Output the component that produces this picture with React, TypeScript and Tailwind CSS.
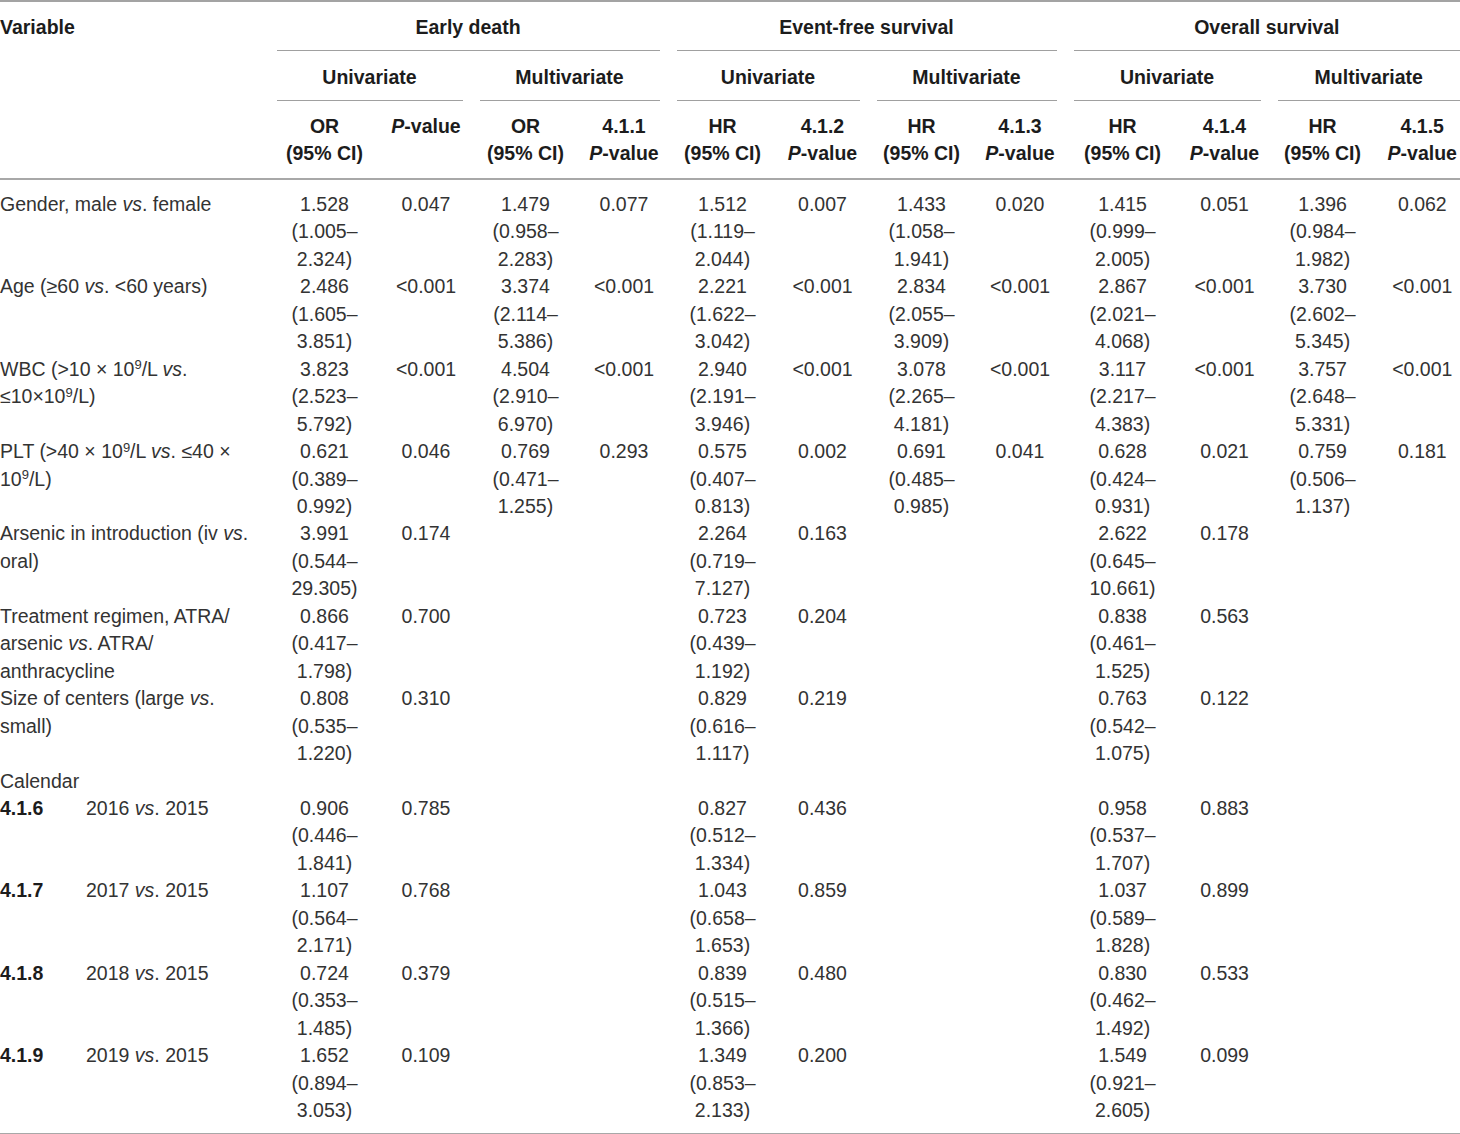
import React from "react";

type Cells = ([string, string, string, string] | null)[];

const Vs = () => <i>vs</i>;

const rows: { label: React.ReactNode; cells: Cells }[] = [
  {
    label: <>Gender, male <Vs />. female</>,
    cells: [
      ["1.528", "(1.005–", "2.324)", "0.047"],
      ["1.479", "(0.958–", "2.283)", "0.077"],
      ["1.512", "(1.119–", "2.044)", "0.007"],
      ["1.433", "(1.058–", "1.941)", "0.020"],
      ["1.415", "(0.999–", "2.005)", "0.051"],
      ["1.396", "(0.984–", "1.982)", "0.062"],
    ],
  },
  {
    label: <>Age (≥60 <Vs />. &lt;60 years)</>,
    cells: [
      ["2.486", "(1.605–", "3.851)", "<0.001"],
      ["3.374", "(2.114–", "5.386)", "<0.001"],
      ["2.221", "(1.622–", "3.042)", "<0.001"],
      ["2.834", "(2.055–", "3.909)", "<0.001"],
      ["2.867", "(2.021–", "4.068)", "<0.001"],
      ["3.730", "(2.602–", "5.345)", "<0.001"],
    ],
  },
  {
    label: (
      <>
        WBC (&gt;10 × 10<sup className="text-[13px]">9</sup>/L <Vs />.
        <br />≤10×10<sup className="text-[13px]">9</sup>/L)
      </>
    ),
    cells: [
      ["3.823", "(2.523–", "5.792)", "<0.001"],
      ["4.504", "(2.910–", "6.970)", "<0.001"],
      ["2.940", "(2.191–", "3.946)", "<0.001"],
      ["3.078", "(2.265–", "4.181)", "<0.001"],
      ["3.117", "(2.217–", "4.383)", "<0.001"],
      ["3.757", "(2.648–", "5.331)", "<0.001"],
    ],
  },
  {
    label: (
      <>
        PLT (&gt;40 × 10<sup className="text-[13px]">9</sup>/L <Vs />. ≤40 ×
        <br />10<sup className="text-[13px]">9</sup>/L)
      </>
    ),
    cells: [
      ["0.621", "(0.389–", "0.992)", "0.046"],
      ["0.769", "(0.471–", "1.255)", "0.293"],
      ["0.575", "(0.407–", "0.813)", "0.002"],
      ["0.691", "(0.485–", "0.985)", "0.041"],
      ["0.628", "(0.424–", "0.931)", "0.021"],
      ["0.759", "(0.506–", "1.137)", "0.181"],
    ],
  },
  {
    label: (
      <>
        Arsenic in introduction (iv <Vs />.
        <br />
        oral)
      </>
    ),
    cells: [
      ["3.991", "(0.544–", "29.305)", "0.174"],
      null,
      ["2.264", "(0.719–", "7.127)", "0.163"],
      null,
      ["2.622", "(0.645–", "10.661)", "0.178"],
      null,
    ],
  },
  {
    label: (
      <>
        Treatment regimen, ATRA/
        <br />
        arsenic <Vs />. ATRA/
        <br />
        anthracycline
      </>
    ),
    cells: [
      ["0.866", "(0.417–", "1.798)", "0.700"],
      null,
      ["0.723", "(0.439–", "1.192)", "0.204"],
      null,
      ["0.838", "(0.461–", "1.525)", "0.563"],
      null,
    ],
  },
  {
    label: (
      <>
        Size of centers (large <Vs />.
        <br />
        small)
      </>
    ),
    cells: [
      ["0.808", "(0.535–", "1.220)", "0.310"],
      null,
      ["0.829", "(0.616–", "1.117)", "0.219"],
      null,
      ["0.763", "(0.542–", "1.075)", "0.122"],
      null,
    ],
  },
];

const calRows: { tag: string; year: string; cells: Cells }[] = [
  {
    tag: "4.1.6",
    year: "2016",
    cells: [
      ["0.906", "(0.446–", "1.841)", "0.785"],
      null,
      ["0.827", "(0.512–", "1.334)", "0.436"],
      null,
      ["0.958", "(0.537–", "1.707)", "0.883"],
      null,
    ],
  },
  {
    tag: "4.1.7",
    year: "2017",
    cells: [
      ["1.107", "(0.564–", "2.171)", "0.768"],
      null,
      ["1.043", "(0.658–", "1.653)", "0.859"],
      null,
      ["1.037", "(0.589–", "1.828)", "0.899"],
      null,
    ],
  },
  {
    tag: "4.1.8",
    year: "2018",
    cells: [
      ["0.724", "(0.353–", "1.485)", "0.379"],
      null,
      ["0.839", "(0.515–", "1.366)", "0.480"],
      null,
      ["0.830", "(0.462–", "1.492)", "0.533"],
      null,
    ],
  },
  {
    tag: "4.1.9",
    year: "2019",
    cells: [
      ["1.652", "(0.894–", "3.053)", "0.109"],
      null,
      ["1.349", "(0.853–", "2.133)", "0.200"],
      null,
      ["1.549", "(0.921–", "2.605)", "0.099"],
      null,
    ],
  },
];

function DataCells({ cells, extra = "" }: { cells: Cells; extra?: string }) {
  return (
    <>
      {cells.map((c, i) => {
        const last = i === cells.length - 1;
        return (
          <React.Fragment key={i}>
            <td className={"align-top text-center px-[8.5px] " + extra}>
              {c ? (
                <>
                  {c[0]}
                  <br />
                  {c[1]}
                  <br />
                  {c[2]}
                </>
              ) : null}
            </td>
            <td className={"align-top text-center " + (last ? "pl-[8.5px] pr-0 " : "px-[8.5px] ") + extra}>
              {c ? c[3] : null}
            </td>
          </React.Fragment>
        );
      })}
    </>
  );
}

function PHead({ num, last }: { num?: string; last?: boolean }) {
  return (
    <th className={"align-top text-center font-bold pt-[12px] pb-[11px] " + (last ? "pl-[8.5px] pr-0" : "px-[8.5px]")}>
      {num ? num : ""}
      {num ? <br /> : null}
      <i>P</i>-value
    </th>
  );
}

function EstHead({ kind }: { kind: string }) {
  return (
    <th className="align-top text-center font-bold px-[8.5px] pt-[12px] pb-[11px]">
      {kind}
      <br />
      (95% CI)
    </th>
  );
}

export default function App() {
  return (
    <div className="bg-white w-[1460px] h-[1134px] overflow-hidden">
      <table
        className="table-fixed border-collapse w-[1460px] text-[19.5px] leading-[27.45px] text-[#333333]"
        style={{ fontFamily: '"Liberation Sans", Arial, Helvetica, sans-serif' }}
      >
        <colgroup>
          <col className="w-[268px]" />
          <col className="w-[113px]" />
          <col className="w-[90px]" />
          <col className="w-[109px]" />
          <col className="w-[88px]" />
          <col className="w-[109px]" />
          <col className="w-[91px]" />
          <col className="w-[107px]" />
          <col className="w-[90px]" />
          <col className="w-[115px]" />
          <col className="w-[89px]" />
          <col className="w-[107px]" />
          <col className="w-[84px]" />
        </colgroup>
        <thead className="text-[#1c1c1c] leading-[27px]">
          <tr className="border-t-2 border-[#a3a3a3]">
            <th rowSpan={3} className="align-top text-left font-bold pl-0 pt-[12px] border-b-2 border-[#a8a8a8]">
              Variable
            </th>
            {["Early death", "Event-free survival", "Overall survival"].map((t, i) => (
              <th key={t} colSpan={4} className={"font-bold p-0 " + (i === 2 ? "pl-[8.5px]" : "px-[8.5px]")}>
                <div className="pt-[12px] pb-[9px] border-b border-[#a0a0a0]">{t}</div>
              </th>
            ))}
          </tr>
          <tr>
            {[0, 1, 2, 3, 4, 5].map((i) => (
              <th key={i} colSpan={2} className={"font-bold p-0 " + (i === 5 ? "pl-[8.5px]" : "px-[8.5px]")}>
                <div className="pt-[13px] pb-[9px] border-b border-[#a0a0a0]">
                  {i % 2 === 0 ? "Univariate" : "Multivariate"}
                </div>
              </th>
            ))}
          </tr>
          <tr className="border-b-2 border-[#a8a8a8]">
            <EstHead kind="OR" />
            <PHead />
            <EstHead kind="OR" />
            <PHead num="4.1.1" />
            <EstHead kind="HR" />
            <PHead num="4.1.2" />
            <EstHead kind="HR" />
            <PHead num="4.1.3" />
            <EstHead kind="HR" />
            <PHead num="4.1.4" />
            <EstHead kind="HR" />
            <PHead num="4.1.5" last />
          </tr>
        </thead>
        <tbody>
          {rows.map((r, idx) => (
            <tr key={idx}>
              <td className={"align-top text-left pl-0 pr-[8.5px] " + (idx === 0 ? "pt-[11px]" : "")}>{r.label}</td>
              <DataCells cells={r.cells} extra={idx === 0 ? "pt-[11px]" : ""} />
            </tr>
          ))}
          <tr>
            <td className="align-top text-left pl-0">Calendar</td>
            <td colSpan={12}></td>
          </tr>
          {calRows.map((r, idx) => {
            const isLast = idx === calRows.length - 1;
            return (
              <tr key={r.tag} className={isLast ? "border-b-2 border-[#a8a8a8]" : ""}>
                <td className={"align-top text-left pl-0 " + (isLast ? "pb-[9px]" : "")}>
                  <div className="flex">
                    <span className="w-[86px] font-bold text-[#1c1c1c]">{r.tag}</span>
                    <span>
                      {r.year} <Vs />. 2015
                    </span>
                  </div>
                </td>
                <DataCells cells={r.cells} extra={isLast ? "pb-[9px]" : ""} />
              </tr>
            );
          })}
        </tbody>
      </table>
    </div>
  );
}
